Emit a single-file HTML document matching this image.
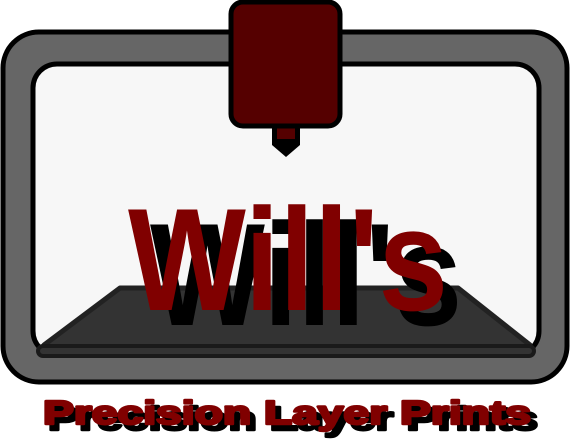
<!DOCTYPE html>
<html><head><style>html,body{margin:0;padding:0;background:#fff;}svg{display:block}</style></head>
<body>
<svg width="571" height="444" viewBox="0 0 571 444" xmlns="http://www.w3.org/2000/svg">
<!-- frame -->
<rect x="3" y="32" width="564" height="350" rx="36" fill="#666" stroke="#000" stroke-width="5"/>
<rect x="33" y="64" width="506" height="291" rx="24" fill="#f7f7f7" stroke="#000" stroke-width="5"/>
<!-- bed -->
<path d="M44 350 L44 345 L120 288 L458 288 L530 345 L530 350 Z" fill="#333" stroke="#222" stroke-width="5" stroke-linejoin="round"/>
<rect x="38" y="346" width="496" height="10" rx="5" fill="#333" stroke="#1a1a1a" stroke-width="4"/>
<!-- nozzle -->
<path d="M272 126 L272 145 L286 157 L300 145 L300 126 Z" fill="#000"/>
<rect x="277" y="126" width="18" height="13" fill="#550000"/>
<rect x="231" y="2" width="109" height="124" rx="12" fill="#550000" stroke="#000" stroke-width="5"/>
<!-- Will's -->
<g font-family="Liberation Sans, sans-serif" font-weight="bold" font-size="146">
<text x="150" y="325" textLength="312" lengthAdjust="spacingAndGlyphs" fill="#000">Will's</text>
<text x="128" y="310" textLength="320" lengthAdjust="spacingAndGlyphs" fill="#800000">Will's</text>
</g>
<!-- tagline -->
<g font-family="Liberation Sans, sans-serif" font-weight="bold" font-size="33" stroke-width="2.5" stroke-linejoin="round">
<text x="48" y="430" textLength="490" lengthAdjust="spacingAndGlyphs" fill="#000" stroke="#000">Precision Layer Prints</text>
<text x="43" y="424" textLength="488" lengthAdjust="spacingAndGlyphs" fill="#800000" stroke="#800000">Precision Layer Prints</text>
</g>
</svg>
</body></html>
